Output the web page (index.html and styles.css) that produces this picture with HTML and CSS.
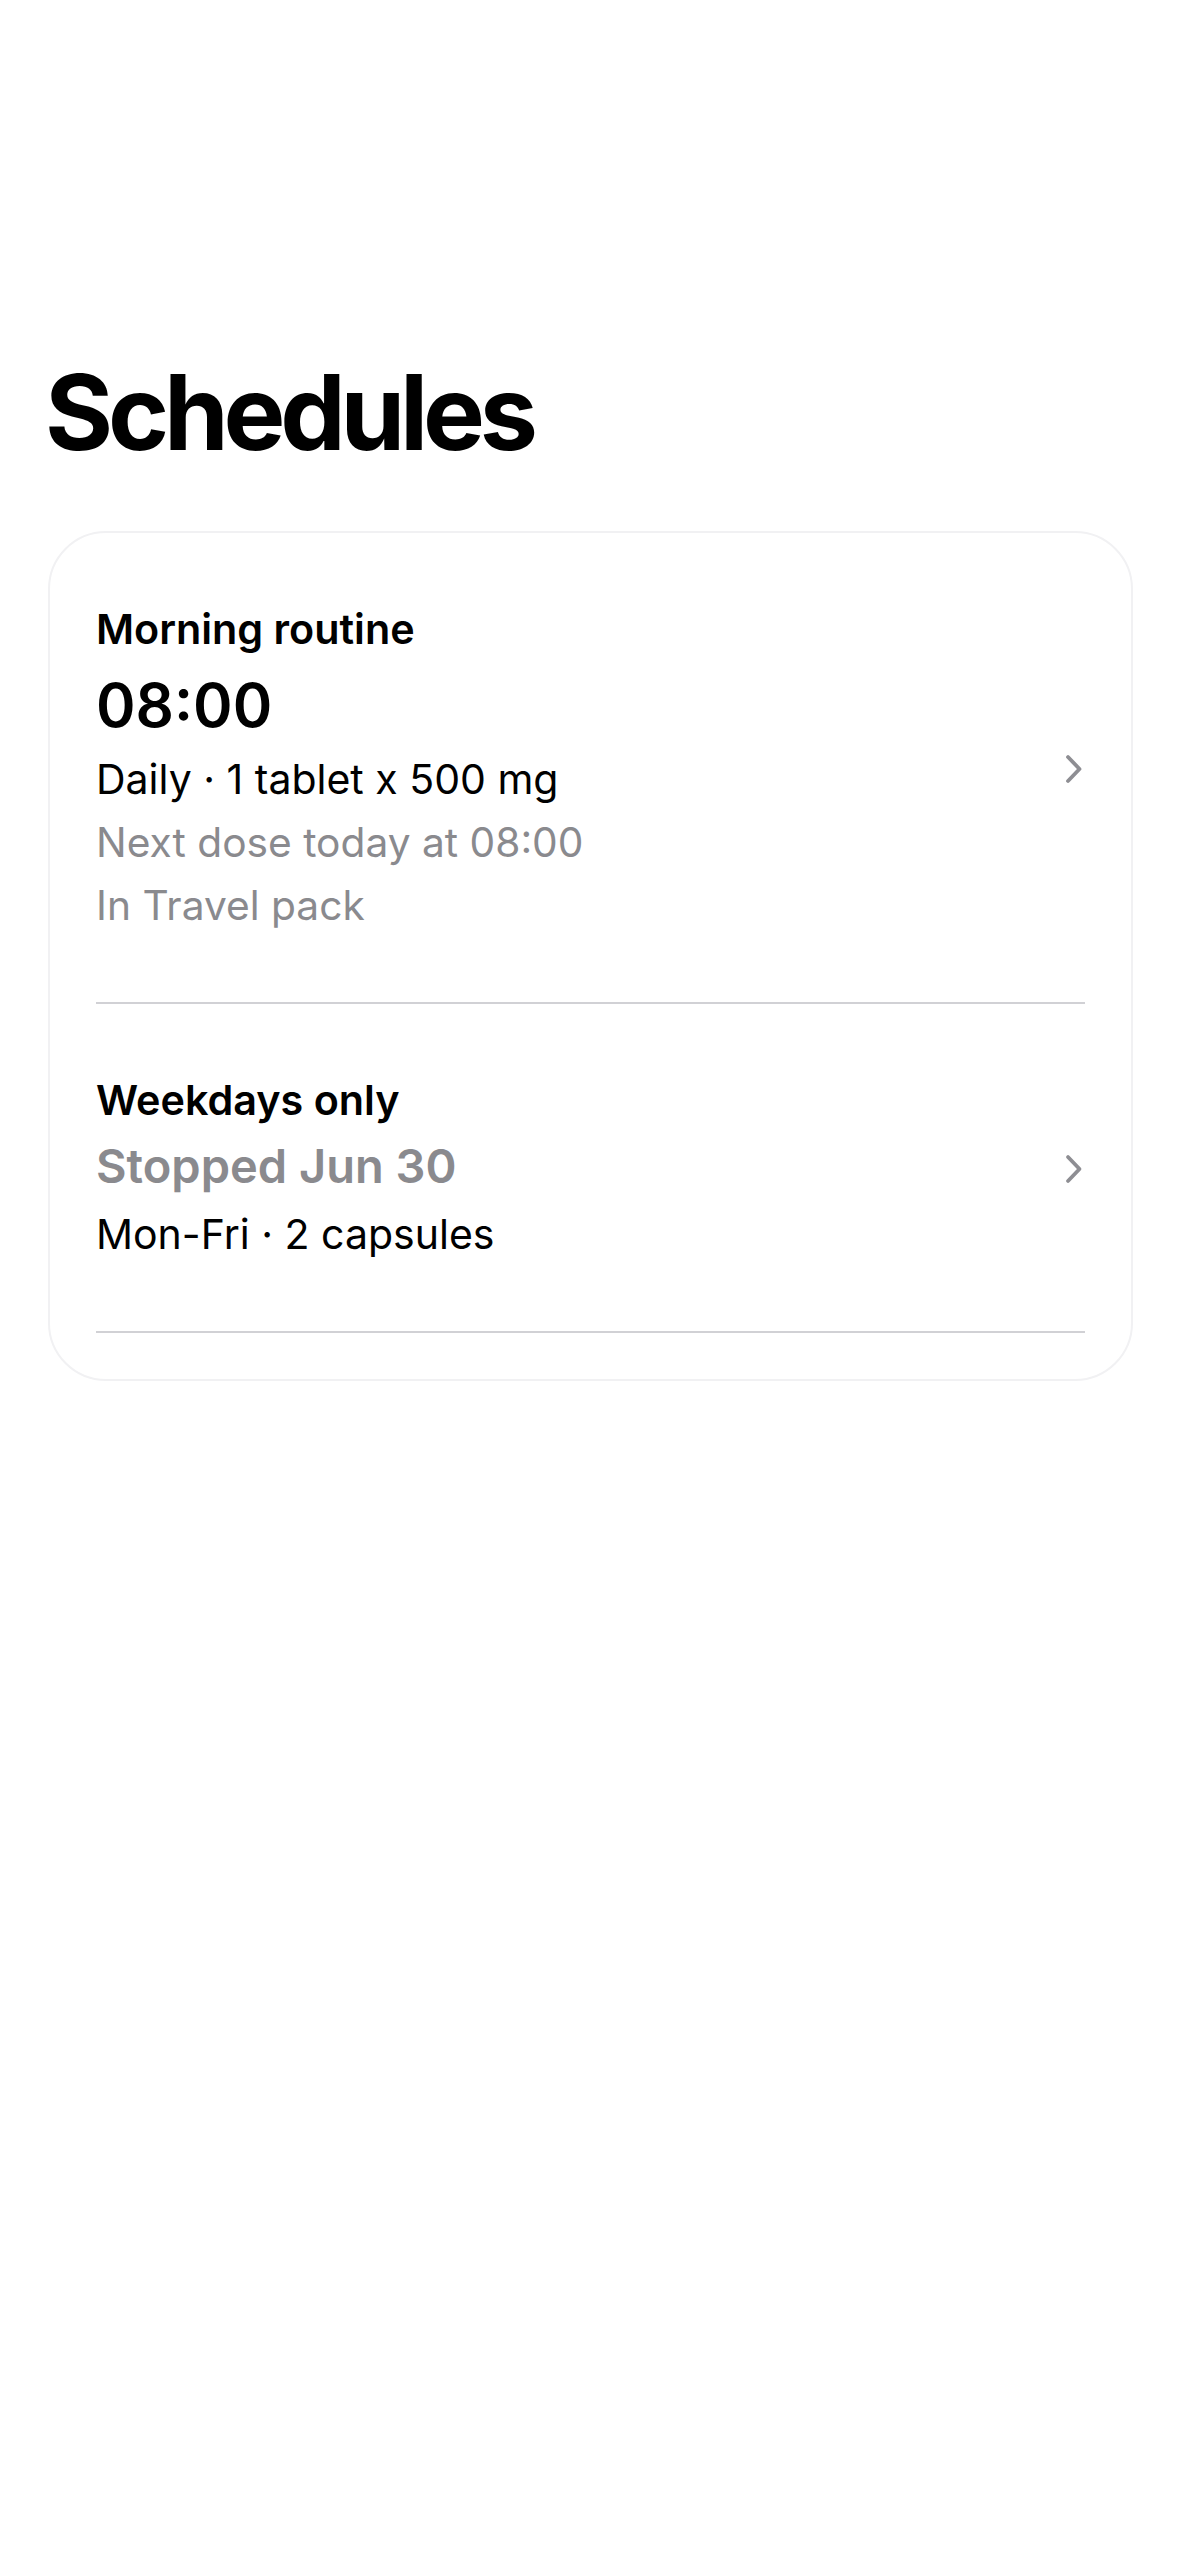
FILE: index.html
```html
<!DOCTYPE html>
<html lang="en">
<head>
<meta charset="utf-8">
<title>Schedules</title>
<link rel="stylesheet" href="styles.css">
</head>
<body>
<main class="screen">
  <h1 class="page-title">Schedules</h1>
  <section class="card">
    <a class="row">
      <div class="row-text">
        <div class="row-name">Morning routine</div>
        <div class="row-time">08:00</div>
        <div class="row-line">Daily · 1 tablet x 500 mg</div>
        <div class="row-line muted">Next dose today at 08:00</div>
        <div class="row-line muted">In Travel pack</div>
      </div>
      <svg class="chevron" viewBox="0 0 22 30" width="22" height="30" aria-hidden="true"><path d="M5 3 L16.5 15 L5 27" fill="none" stroke="currentColor" stroke-width="3.8" stroke-linecap="round" stroke-linejoin="round"/></svg>
    </a>
    <a class="row">
      <div class="row-text">
        <div class="row-name">Weekdays only</div>
        <div class="row-status">Stopped Jun 30</div>
        <div class="row-line">Mon-Fri · 2 capsules</div>
      </div>
      <svg class="chevron" viewBox="0 0 22 30" width="22" height="30" aria-hidden="true"><path d="M5 3 L16.5 15 L5 27" fill="none" stroke="currentColor" stroke-width="3.8" stroke-linecap="round" stroke-linejoin="round"/></svg>
    </a>
  </section>
</main>
</body>
</html>
```

FILE: styles.css
```css
* { box-sizing: border-box; }

html, body {
  margin: 0;
  padding: 0;
  background: #ffffff;
}

body {
  font-family: Inter, "Noto Sans", "Liberation Sans", sans-serif;
  color: #000000;
  width: 1179px;
  min-height: 2556px;
}

.screen {
  padding: 350px 46px 0 48px;
}

.page-title {
  margin: 0 0 56px -3px;
  font-size: 104px;
  line-height: 125px;
  font-weight: 700;
  letter-spacing: -0.05em;
}

.card {
  border: 2px solid #f1f1f3;
  border-radius: 58px;
  padding: 0 46px 46px 46px;
  background: #ffffff;
}

.row {
  display: flex;
  align-items: center;
  justify-content: space-between;
  border-bottom: 2px solid #d1d1d5;
  padding: 68px 0 65px 0;
  color: inherit;
  text-decoration: none;
}

.row-text {
  display: flex;
  flex-direction: column;
}

.row-name {
  font-size: 41.3px;
  line-height: 56px;
  font-weight: 600;
}

.row-time {
  margin-top: 6px;
  font-size: 60px;
  line-height: 85px;
  font-weight: 600;
}

.row-status {
  font-size: 47px;
  line-height: 75px;
  font-weight: 600;
  color: #8a8a8e;
}

.row-line {
  font-size: 41px;
  line-height: 63px;
  font-weight: 400;
}

.muted {
  font-size: 40.7px;
  color: #8a8a8e;
}

.chevron {
  flex: none;
  color: #8e8e93;
  display: block;
}
```
